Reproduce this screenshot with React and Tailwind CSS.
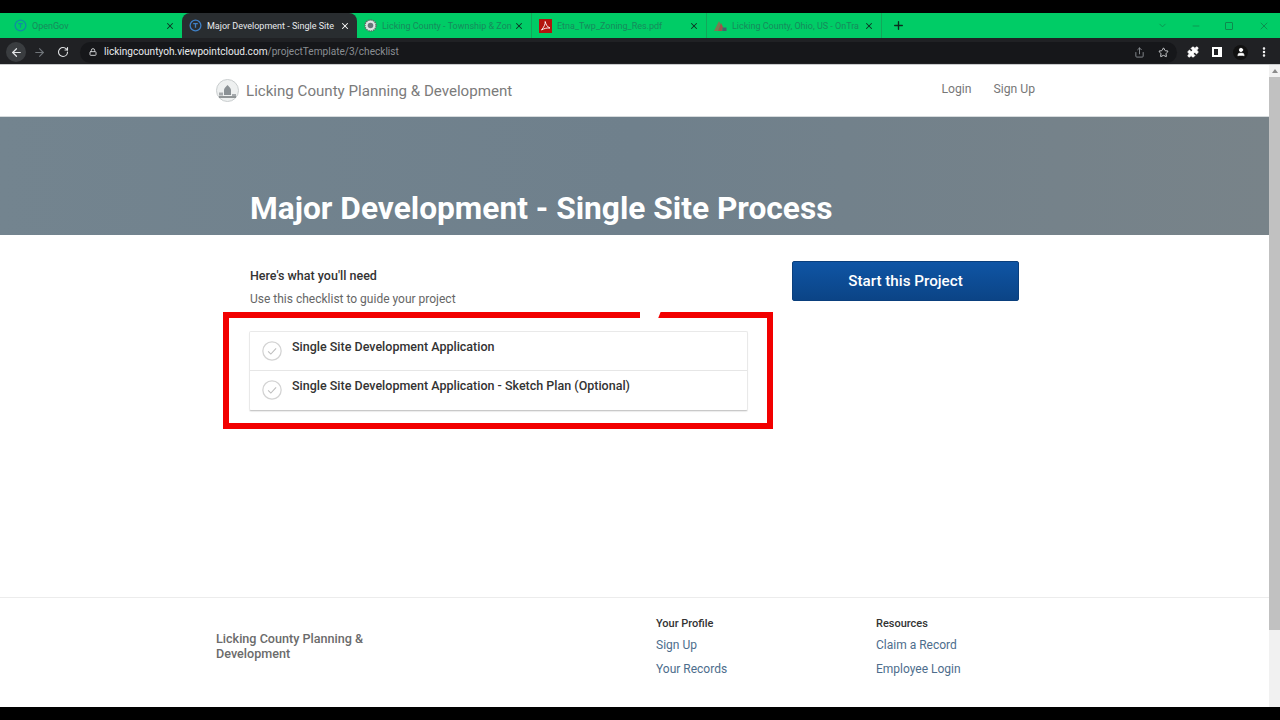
import { ArrowLeft, ArrowRight, RotateCw, Lock, Share, Star, Puzzle, User, MoreVertical, Plus, X, ChevronDown, Minus } from "lucide-react";

const tabs = [
  { title: "OpenGov", width: "w-[182px] pl-[14px]", icon: "gov" },
  { title: "Major Development - Single Site", width: "w-[175px] pl-[7px]", icon: "gov", active: true },
  { title: "Licking County - Township & Zon", width: "w-[175px] pl-[7px]", icon: "seal", divider: true },
  { title: "Etna_Twp_Zoning_Res.pdf", width: "w-[175px] pl-[7px]", icon: "pdf", divider: true },
  { title: "Licking County, Ohio, US - OnTra", width: "w-[175px] pl-[7px]", icon: "trail", divider: true },
];

function TabIcon({ type, active }) {
  if (type === "gov") {
    return (
      <svg width="13" height="13" viewBox="0 0 14 14" className="shrink-0">
        <circle cx="7" cy="7" r="5.8" fill="none" stroke={active ? "#3f7fc4" : "#0f8fa0"} strokeWidth="1.4" />
        <path d="M4.5 5h5M7 5v4.5" stroke={active ? "#3f7fc4" : "#0f8fa0"} strokeWidth="1.4" fill="none" />
      </svg>
    );
  }
  if (type === "seal") {
    return (
      <svg width="13" height="13" viewBox="0 0 14 14" className="shrink-0">
        <circle cx="7" cy="7" r="6" fill="#dfe4e2" stroke="#5b6b66" strokeWidth="1.6" strokeDasharray="1.5 1" />
        <circle cx="7" cy="7" r="3" fill="#69767a" />
      </svg>
    );
  }
  if (type === "pdf") {
    return (
      <svg width="13" height="14" viewBox="0 0 13 14" className="shrink-0">
        <rect width="13" height="14" fill="#b3150f" />
        <path d="M2.5 11C5 8 6.5 5 6.2 2.500 7 6 8.500 8 11 9 8 8.700 5 9.500 2.500 11Z" fill="none" stroke="#fff" strokeWidth="0.9" />
      </svg>
    );
  }
  return (
    <svg width="13" height="12" viewBox="0 0 13 12" className="shrink-0">
      <path d="M0 11 5 1l1.500 3L4 11Z" fill="#7c7a52" />
      <path d="M4 11 7 3l2 4-1 4Z" fill="#a3504a" />
      <rect x="8.500" y="7.500" width="4" height="3.500" fill="#47606b" />
    </svg>
  );
}

function BrowserChrome() {
  return (
    <div className="shrink-0 font-['Roboto',sans-serif]">
      <div className="h-[13px] bg-black" />
      <div className="h-[25px] bg-[#00cc66] flex items-center relative">
        {tabs.map((tab) => (
          <div
            key={tab.title}
            className={`${tab.width} h-full flex items-center gap-[5px] pr-[7px] shrink-0 ${
              tab.active ? "bg-[#292d30] rounded-t-lg text-[#e8eaed]" : "text-[#178a5c]"
            } ${tab.divider ? "border-r border-[#12a85a]" : ""}`}
          >
            <TabIcon type={tab.icon} active={tab.active} />
            <span className="flex-1 min-w-0 whitespace-nowrap text-[9px] leading-[12px]">
              {tab.title}
            </span>
            <X size={10} strokeWidth={2.5} className={`shrink-0 ${tab.active ? "text-white" : "text-[#0d3324]"}`} />
          </div>
        ))}
        <Plus size={13} strokeWidth={2.5} className="ml-[10px] text-[#0d2c1e]" />
        <div className="ml-auto flex items-center text-[#0c9050]">
          <ChevronDown size={11} className="mr-[23px]" />
          <Minus size={10} className="mr-[24px]" />
          <div className="w-[8px] h-[8px] border border-[#0d8a4e] rounded-[1px] mr-[25px]" />
          <X size={12} className="mr-[10px]" />
        </div>
      </div>
      <div className="h-[27px] pt-[2px] bg-[#202124] border-b border-[#c9cbcc] flex items-center text-[#e3e5e7]">
        <div className="w-[20px] h-[20px] ml-[6px] rounded-full bg-[#3a3d40] flex items-center justify-center">
          <ArrowLeft size={13} strokeWidth={2.2} />
        </div>
        <ArrowRight size={13} strokeWidth={2} className="ml-[7px] text-[#70757a]" />
        <RotateCw size={12} strokeWidth={2.2} className="ml-[11px]" />
        <div className="ml-[11px] flex-1 h-[21px] rounded-full bg-[#16171a] flex items-center pl-[9px] pr-[8px]">
          <Lock size={8} strokeWidth={3} className="text-[#c8cacc]" />
          <span className="ml-[7px] text-[10.1px] leading-none text-[#e8eaed]">
            lickingcountyoh.viewpointcloud.com<span className="text-[#8a8e93]">/projectTemplate/3/checklist</span>
          </span>
          <Share size={11} className="ml-auto text-[#8a8e93]" />
          <Star size={11} className="ml-[13px] text-[#d7d9db]" />
        </div>
        <Puzzle size={12} fill="currentColor" className="ml-[10px] text-white" />
        <div className="ml-[13px] w-[10px] h-[10px] border-2 border-white border-r-[4px]" />
        <div className="ml-[11px] w-[15px] h-[15px] rounded-full bg-[#111] flex items-center justify-center">
          <User size={10} fill="currentColor" className="text-white" />
        </div>
        <MoreVertical size={12} strokeWidth={3} className="ml-[10px] mr-[10px] text-white" />
      </div>
    </div>
  );
}

function CountyLogo() {
  return (
    <svg width="23" height="23" viewBox="0 0 23 23" className="shrink-0">
      <circle cx="11.500" cy="11.500" r="11" fill="#eef0f0" stroke="#c9cdce" />
      <path d="M8 16v-5c0-2 2-3 3.500-5 1.500 2 3.500 3 3.500 5v5Z" fill="#8b9195" />
      <path d="M3 13.500h4v3H3ZM16 15h4v2h-4Z" fill="#a5a9ac" />
      <path d="M3 18h17" stroke="#73787b" strokeWidth="1.500" />
    </svg>
  );
}

function ChecklistRow({ title, last }) {
  return (
    <div className={`h-[39px] flex pl-[12px] ${last ? "" : "border-b border-[#e6e6e6]"}`}>
      <svg width="20" height="20" viewBox="0 0 19 19" className="mt-[9px] shrink-0">
        <circle cx="9.500" cy="9.500" r="8.700" fill="none" stroke="#d3d3d3" strokeWidth="1.200" />
        <path d="M5.800 9.800l2.600 2.600 5-5.400" fill="none" stroke="#bdbdbd" strokeWidth="1" />
      </svg>
      <span className="ml-[10px] mt-[6px] text-[12.5px] leading-[18px] font-medium text-[#333]">{title}</span>
    </div>
  );
}

function FooterColumn({ heading, links, width }) {
  return (
    <div className={width}>
      <p className="text-[11px] leading-[14px] font-medium text-[#333]">{heading}</p>
      <div className="mt-[6px] flex flex-col gap-[7px]">
        {links.map((link) => (
          <a key={link} className="text-[12px] leading-[17px] text-[#4d6d8c]">{link}</a>
        ))}
      </div>
    </div>
  );
}

export default function App() {
  return (
    <div className="h-[720px] flex flex-col overflow-hidden bg-black font-['Roboto',sans-serif]">
      <BrowserChrome />

      <div className="flex-1 min-h-0 flex bg-white">
        <div className="flex-1 min-w-0 flex flex-col relative">
          {/* Top nav */}
          <header className="h-[52px] shrink-0 flex items-center pl-[216px] pr-[234px] border-b border-[#d6dbdd]">
            <CountyLogo />
            <span className="ml-[7px] mt-[1px] text-[15.1px] text-[#7b7b7b]">Licking County Planning &amp; Development</span>
            <nav className="ml-auto flex gap-[22px] text-[12.2px] text-[#777] mb-[2px]">
              <a>Login</a>
              <a>Sign Up</a>
            </nav>
          </header>

          {/* Banner */}
          <div className="h-[118px] shrink-0 bg-gradient-to-r from-[#73848f] via-[#6f808c] to-[#788389] flex items-end pl-[250px] pb-[8px]">
            <h1 className="text-[31.7px] leading-[36px] font-bold text-white">Major Development - Single Site Process</h1>
          </div>

          {/* Checklist and start button */}
          <main className="flex-1 flex pl-[250px] pt-[26px]">
            <div className="w-[498px] shrink-0">
              <p className="text-[12.5px] leading-[16px] font-medium text-[#333] mt-[7px]">Here's what you'll need</p>
              <p className="text-[12px] leading-[16px] text-[#666] mt-[7px]">Use this checklist to guide your project</p>
              <div className="mt-[24px] -ml-px border border-[#e9e9e9] border-b-[#c9c9c9] rounded-[2px] shadow-[0_1px_1px_rgba(0,0,0,0.08)]">
                <ChecklistRow title="Single Site Development Application" />
                <ChecklistRow title="Single Site Development Application - Sketch Plan (Optional)" last />
              </div>
            </div>
            <button className="ml-[44px] w-[227px] h-[40px] rounded-[2px] bg-gradient-to-b from-[#0f55a5] to-[#0b4486] border border-[#0a3f7d] text-white text-[15.2px] font-medium">
              Start this Project
            </button>
          </main>

          {/* Footer */}
          <footer className="h-[110px] shrink-0 border-t border-[#ececec] flex pl-[216px]">
            <p className="w-[440px] pt-[33px] text-[12.6px] leading-[15px] font-medium text-[#6b6b6b]">
              Licking County Planning &amp;<br />Development
            </p>
            <div className="flex pt-[19px]">
              <FooterColumn heading="Your Profile" links={["Sign Up", "Your Records"]} width="w-[220px]" />
              <FooterColumn heading="Resources" links={["Claim a Record", "Employee Login"]} width="w-[150px]" />
            </div>
          </footer>

          {/* Red annotation drawn over the video */}
          <div className="absolute left-[223px] top-[247px] w-[550px] h-[117px] border-[6px] border-[#f20000]" />
          <div className="absolute left-[640px] top-[246px] w-[21px] h-[8px] bg-white [clip-path:polygon(0_0,100%_0,85%_100%,0_100%)]" />
        </div>

        {/* Scrollbar */}
        <div className="w-[11px] shrink-0 bg-[#f1f1f1] flex flex-col">
          <div className="h-[12px] flex items-center justify-center">
            <div className="w-0 h-0 border-x-[3px] border-x-transparent border-b-[4px] border-b-[#8a8a8a]" />
          </div>
          <div className="h-[553px] bg-[#c1c1c1]" />
        </div>
      </div>

      <div className="h-[13px] shrink-0 bg-black" />
    </div>
  );
}
